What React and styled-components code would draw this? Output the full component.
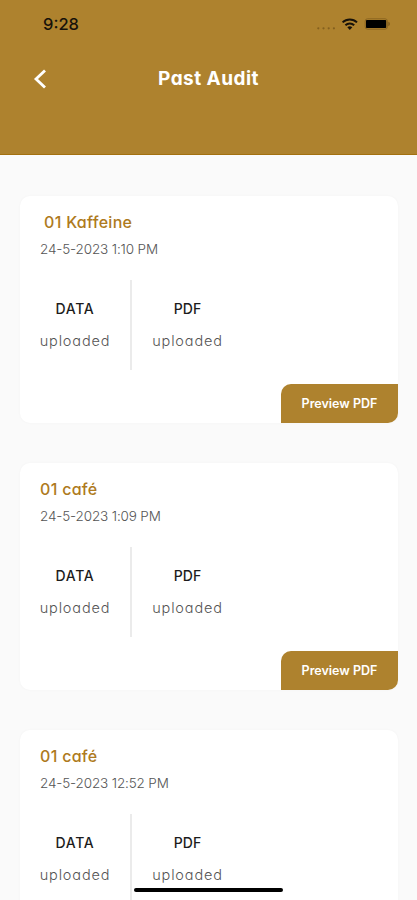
import React from "react";
import styled, { createGlobalStyle } from "styled-components";

const GlobalStyle = createGlobalStyle`
  * {
    box-sizing: border-box;
  }
  body {
    margin: 0;
    overflow: hidden;
    background-color: #fafafa;
    font-family: "Inter", "Liberation Sans", sans-serif;
    font-feature-settings: "cv11" 1;
  }
`;

const Screen = styled.div`
  position: relative;
  height: 900px;
  overflow: hidden;
  background-color: #fafafa;
`;

const Header = styled.header`
  height: 155px;
  background-color: #ae822e;
  border-bottom: 1px solid #a3700f;
`;

const StatusBar = styled.div`
  display: flex;
  align-items: center;
  justify-content: space-between;
  height: 48px;
  padding: 0 25px 0 43px;
`;

const Time = styled.span`
  font-size: 16.5px;
  font-weight: 500;
  line-height: 20px;
  color: #17120a;
`;

const StatusIcons = styled.svg`
  display: block;
`;

const TitleBar = styled.div`
  display: grid;
  grid-template-columns: 60px 1fr 60px;
  align-items: center;
  height: 62px;
`;

const BackButton = styled.button`
  display: flex;
  justify-content: flex-end;
  padding: 0 13px 0 0;
  border: none;
  background: none;
  cursor: pointer;
`;

const Title = styled.h1`
  margin: 0;
  font-size: 19px;
  font-weight: 700;
  line-height: 28px;
  letter-spacing: 0.45px;
  text-align: center;
  color: #fff;
`;

const AuditList = styled.main`
  display: flex;
  flex-direction: column;
  gap: 40px;
  padding: 41px 19px 0 20px;
`;

const Card = styled.article`
  display: flex;
  flex-direction: column;
  flex-shrink: 0;
  height: 227px;
  padding: 15px 0 0 20px;
  border-radius: 10px;
  background-color: #fff;
  box-shadow: 0 0 3px rgba(0, 0, 0, 0.03);
`;

const CardName = styled.h2`
  margin: 0;
  padding-left: ${({ $indent }) => ($indent ? "4px" : "0")};
  font-size: 16px;
  font-weight: 500;
  line-height: 22px;
  letter-spacing: 0.3px;
  color: #ae7a20;
`;

const CardDate = styled.p`
  margin: 6px 0 0;
  font-size: 13.5px;
  font-weight: 300;
  line-height: 20px;
  letter-spacing: -0.15px;
  color: #555;
`;

const Columns = styled.div`
  display: flex;
  height: 90px;
  margin-top: 21px;
`;

const Column = styled.div`
  display: flex;
  flex-direction: column;
  align-items: center;
  width: ${({ $last }) => ($last ? "111px" : "70px")};
  padding-top: 18px;
`;

const Divider = styled.div`
  width: 2px;
  margin-left: 20px;
  background-color: #ebebeb;
`;

const ColumnTitle = styled.span`
  font-size: 14px;
  font-weight: 500;
  line-height: 21px;
  letter-spacing: ${({ $spacing }) => $spacing || 0}px;
  color: #1c1c1c;
`;

const ColumnValue = styled.span`
  margin-top: 11px;
  font-size: 14.5px;
  font-weight: 300;
  line-height: 22px;
  letter-spacing: 0.85px;
  color: #555;
`;

const PreviewButton = styled.button`
  align-self: flex-end;
  width: 117px;
  height: 39px;
  margin-top: auto;
  padding: 0;
  border: none;
  border-radius: 10px 0;
  background-color: #ae822e;
  font-family: inherit;
  font-feature-settings: inherit;
  font-size: 12.5px;
  font-weight: 600;
  color: #fff;
  cursor: pointer;
`;

const HomeIndicator = styled.div`
  position: absolute;
  bottom: 8px;
  left: 134px;
  width: 149px;
  height: 4px;
  border-radius: 2px;
  background-color: #000;
`;

const audits = [
  { id: 1, name: "01 Kaffeine", date: "24-5-2023 1:10 PM", indent: true, preview: true },
  { id: 2, name: "01 café", date: "24-5-2023 1:09 PM", preview: true },
  { id: 3, name: "01 café", date: "24-5-2023 12:52 PM" },
];

const AuditCard = ({ audit }) => (
  <Card>
    <CardName $indent={audit.indent}>{audit.name}</CardName>
    <CardDate>{audit.date}</CardDate>
    <Columns>
      <Column>
        <ColumnTitle $spacing={0.7}>DATA</ColumnTitle>
        <ColumnValue>uploaded</ColumnValue>
      </Column>
      <Divider />
      <Column $last>
        <ColumnTitle>PDF</ColumnTitle>
        <ColumnValue>uploaded</ColumnValue>
      </Column>
    </Columns>
    {audit.preview && <PreviewButton>Preview PDF</PreviewButton>}
  </Card>
);

const App = () => {
  return (
    <>
      <GlobalStyle />
      <Screen>
        <Header>
          <StatusBar>
            <Time>9:28</Time>
            <StatusIcons width="76" height="16" viewBox="0 0 76 16">
              {/* signal dots */}
              <g fill="#84601f">
                <circle cx="2.3" cy="12.3" r="1.1" />
                <circle cx="7.5" cy="12.3" r="1.1" />
                <circle cx="12.7" cy="12.3" r="1.1" />
                <circle cx="17.9" cy="12.3" r="1.1" />
              </g>
              {/* wifi */}
              <g fill="none" stroke="#17120a" strokeWidth="2">
                <path d="M26.6 6.4a10.4 10.4 0 0 1 14.4 0" />
                <path d="M29.4 9.3a6.3 6.3 0 0 1 8.8 0" />
              </g>
              <path d="M31.3 11.3a3.7 3.7 0 0 1 5 0L33.8 14z" fill="#17120a" />
              {/* battery */}
              <rect x="49.2" y="2.8" width="22.2" height="10.4" rx="2.4" fill="none" stroke="#8a6420" />
              <rect x="50" y="4" width="20.2" height="8" rx="0.8" fill="#000" />
              <path d="M72.4 5.8a2.4 2.4 0 0 1 0 4.4z" fill="#7a581b" />
            </StatusIcons>
          </StatusBar>
          <TitleBar>
            <BackButton aria-label="Back">
              <svg width="14" height="20" viewBox="0 0 14 20" fill="none" stroke="#fff" strokeWidth="2.8">
                <path d="M12 1.5L3 10L12 18.5" />
              </svg>
            </BackButton>
            <Title>Past Audit</Title>
          </TitleBar>
        </Header>
        <AuditList>
          {audits.map((audit) => (
            <AuditCard key={audit.id} audit={audit} />
          ))}
        </AuditList>
        <HomeIndicator />
      </Screen>
    </>
  );
};

export default App;
